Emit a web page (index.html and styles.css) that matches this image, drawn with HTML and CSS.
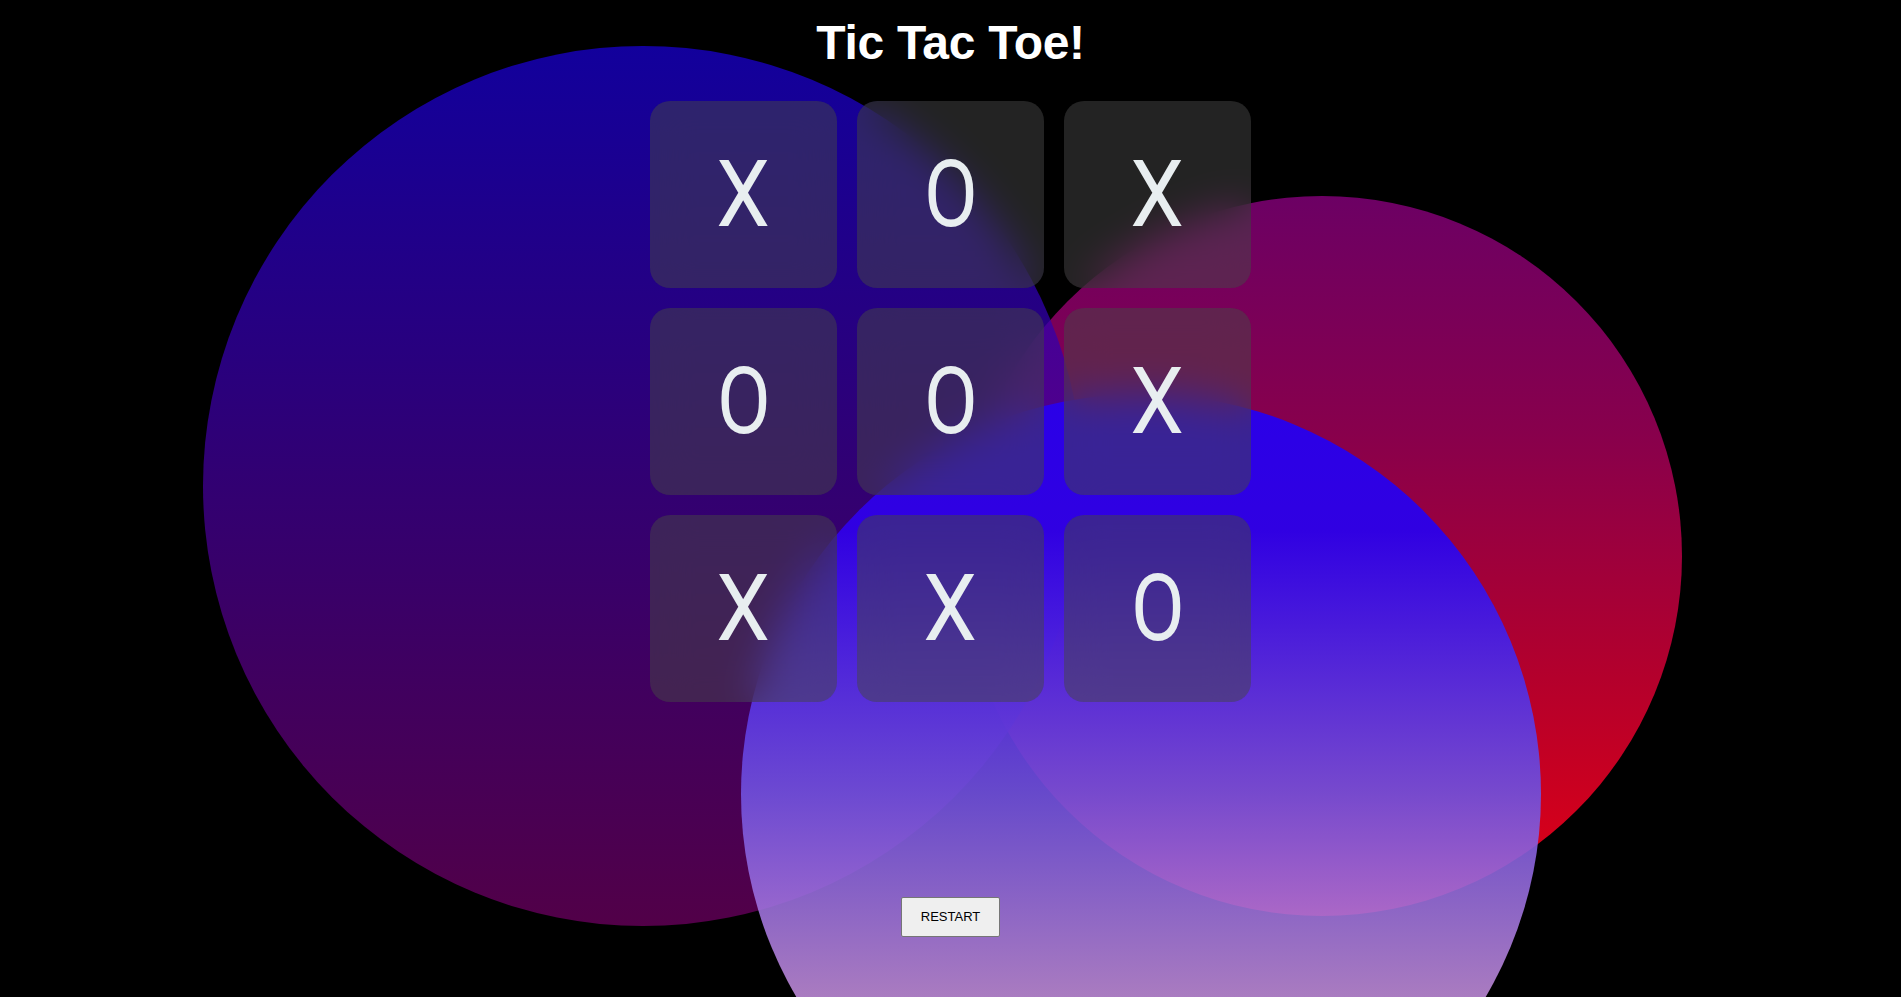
FILE: index.html
```html
<!DOCTYPE html>
<html lang="en">
<head>
<meta charset="utf-8">
<title>Tic Tac Toe!</title>
<link rel="stylesheet" href="styles.css">
</head>
<body>
<div class="bg">
  <div class="blob blob-red"></div>
  <div class="blob blob-left"></div>
  <div class="blob blob-bottom"></div>
</div>
<main class="app">
  <h1 class="title">Tic Tac Toe!</h1>
  <div class="board">
    <div class="cell"><span class="mark x">X</span></div>
    <div class="cell"><span class="mark o">O</span></div>
    <div class="cell"><span class="mark x">X</span></div>
    <div class="cell"><span class="mark o">O</span></div>
    <div class="cell"><span class="mark o">O</span></div>
    <div class="cell"><span class="mark x">X</span></div>
    <div class="cell"><span class="mark x">X</span></div>
    <div class="cell"><span class="mark x">X</span></div>
    <div class="cell"><span class="mark o">O</span></div>
  </div>
  <button class="restart" type="button">RESTART</button>
</main>
</body>
</html>
```

FILE: styles.css
```css
html, body {
  margin: 0;
  padding: 0;
  height: 100%;
}

body {
  background: #000;
  overflow: hidden;
  font-family: "Liberation Sans", Arial, sans-serif;
  position: relative;
}

.bg {
  position: absolute;
  inset: 0;
  overflow: hidden;
  background: #000;
  z-index: 0;
}

.blob {
  position: absolute;
  border-radius: 50%;
}

.blob-red {
  left: 962px;
  top: 196px;
  width: 720px;
  height: 720px;
  background: linear-gradient(to bottom, #6c0064 0%, #88004c 33%, #b4002c 67%, #e40012 100%);
}

.blob-left {
  left: 203px;
  top: 46px;
  width: 880px;
  height: 880px;
  opacity: 0.75;
  background: linear-gradient(to bottom, #1800d0 0%, #6d0060 100%);
}

.blob-bottom {
  left: 741px;
  top: 394px;
  width: 800px;
  height: 800px;
  background: linear-gradient(to bottom,
    rgba(42, 0, 232, 1) 0%,
    rgba(48, 0, 226, 1) 17%,
    rgba(112, 80, 220, 0.92) 50%,
    rgba(198, 144, 226, 0.85) 75%,
    rgba(230, 180, 230, 0.85) 100%);
}

.app {
  position: relative;
  z-index: 1;
  display: flex;
  flex-direction: column;
  align-items: center;
}

.title {
  margin: 15px 0 0;
  font-family: "Liberation Sans", Arial, sans-serif;
  font-weight: 700;
  font-size: 48px;
  line-height: 56px;
  color: #fff;
  letter-spacing: -0.3px;
}

.board {
  margin-top: 30px;
  display: grid;
  grid-template-columns: repeat(3, 187px);
  grid-auto-rows: 187px;
  gap: 20px;
}

.cell {
  border-radius: 20px;
  background: rgba(70, 70, 70, 0.5);
  backdrop-filter: blur(20px);
  -webkit-backdrop-filter: blur(20px);
  display: flex;
  align-items: center;
  justify-content: center;
}

.mark {
  display: inline-block;
  font-family: Roboto, "Liberation Sans", sans-serif;
  font-weight: 400;
  font-size: 93px;
  line-height: 1;
  color: #e8eef0;
}

.mark.x {
  transform: scaleX(0.92);
}

.mark.o {
  transform: scaleX(0.84);
}

.restart {
  margin-top: 195px;
  padding: 11px 19px;
  font-family: "Liberation Sans", Arial, sans-serif;
  font-size: 13px;
  line-height: 16px;
  color: #000;
  background: #efefef;
  border: 1px solid #767676;
  border-radius: 2px;
}
```
